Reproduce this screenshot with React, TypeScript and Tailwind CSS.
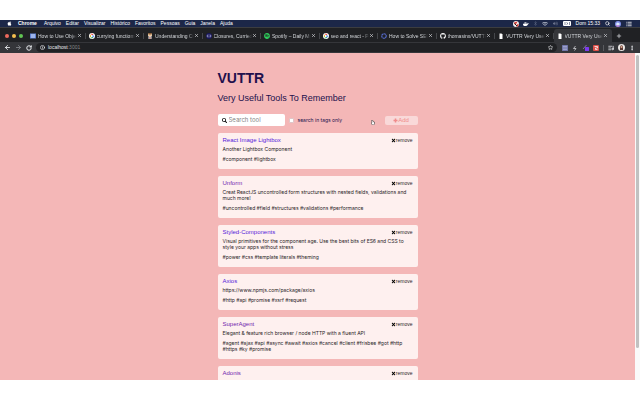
import type { ReactNode } from "react";
import { FaApple, FaDocker, FaGithub, FaSearch, FaSpotify, FaTimes, FaWifi, FaBluetoothB, FaVolumeUp } from "react-icons/fa";
import { ArrowLeft, ArrowRight, EllipsisVertical, Info, List, ListMusic, Plus, RotateCw, Search, Star, X } from "lucide-react";

type Tool = { title: string; description: string; tags: string; visited?: boolean };

const tools: Tool[] = [
  { title: "React Image Lightbox", description: "Another Lightbox Component", tags: "#component #lightbox" },
  {
    title: "Unform",
    description: "Creat ReactJS uncontrolled form structures with nested fields, validations and much more!",
    tags: "#uncontrolled #field #structures #validations #performance",
    visited: true,
  },
  {
    title: "Styled-Components",
    description: "Visual primitives for the component age. Use the best bits of ES6 and CSS to style your apps without stress",
    tags: "#power #css #template literals #theming",
  },
  { title: "Axios", description: "https://www.npmjs.com/package/axios", tags: "#http #api #promise #xsrf #request" },
  {
    title: "SuperAgent",
    description: "Elegant & feature rich browser / node HTTP with a fluent API",
    tags: "#agent #ajax #api #async #await #axios #cancel #client #frisbee #got #http #https #ky #promise",
    visited: true,
  },
  { title: "Adonis", description: "", tags: "", visited: true },
];

const menus = ["Arquivo", "Editar", "Visualizar", "Histórico", "Favoritos", "Pessoas", "Guia", "Janela", "Ajuda"];

function Google() {
  return (
    <svg viewBox="0 0 12 12" className="size-[6px]">
      <circle cx="6" cy="6" r="6" fill="#fff" />
      <g fill="none" strokeWidth="2">
        <path d="M8.6 3.6A3.5 3.5 0 0 0 3 4.3" stroke="#ea4335" />
        <path d="M3 4.3A3.5 3.5 0 0 0 3 7.8" stroke="#fbbc05" />
        <path d="M3 7.8A3.5 3.5 0 0 0 8.2 8.7" stroke="#34a853" />
        <path d="M8.2 8.7A3.5 3.5 0 0 0 9.5 6H6" stroke="#4285f4" />
      </g>
    </svg>
  );
}

function Doc() {
  return (
    <svg viewBox="0 0 12 12" className="size-[6px]">
      <rect y="1" width="12" height="10" fill="#5f83d8" />
      <path d="M2 4h8M2 8h8" stroke="#dce6ff" strokeWidth="2" />
    </svg>
  );
}

function Person() {
  return (
    <svg viewBox="0 0 12 12" className="size-[6px]">
      <path d="M2 1h8v5H2z" fill="#e8c8a0" />
      <path d="M3 0h6v3H3z" fill="#8b5a32" />
      <path d="M3 6h6v6H3z" fill="#e9e9e9" />
      <path d="M5 7h2v5H5z" fill="#9c4a3b" />
    </svg>
  );
}

function Closure() {
  return (
    <svg viewBox="0 0 12 12" className="size-[6px]">
      <circle cx="6" cy="6" r="6" fill="#17165c" />
      <path d="M4 3 2 6l2 3M8 3l2 3-2 3" fill="none" stroke="#e4e4ff" strokeWidth="1.2" />
      <circle cx="6" cy="6" r="1" fill="#fff" />
    </svg>
  );
}

function Ring() {
  return (
    <svg viewBox="0 0 12 12" className="size-[6px]">
      <circle cx="6" cy="6" r="4.5" fill="none" stroke="#5368c9" strokeWidth="2.4" strokeDasharray="4 .7" />
    </svg>
  );
}

function Page() {
  return (
    <svg viewBox="0 0 12 12" className="size-[6px]">
      <path d="M3 1h4l2 2v9H3z" fill="#fff" />
    </svg>
  );
}

const tabs: { icon: ReactNode; title: string }[] = [
  { icon: <Doc />, title: "How to Use Object" },
  { icon: <Google />, title: "currying functions j" },
  { icon: <Person />, title: "Understanding Cur" },
  { icon: <Closure />, title: "Closures, Curried F" },
  { icon: <FaSpotify className="size-[6px] text-[#2fd15d]" />, title: "Spotify – Daily Mix 1" },
  { icon: <Google />, title: "seo and react - Pe" },
  { icon: <Ring />, title: "How to Solve SEO I" },
  { icon: <FaGithub className="size-[6px] text-white" />, title: "thomasinx/VUTTR" },
  { icon: <Page />, title: "VUTTR Very Useful" },
  { icon: <Page />, title: "VUTTR Very Useful" },
];

function MenuBar() {
  return (
    <header className="flex h-[7px] shrink-0 items-center bg-[#1c2748] pr-2 pl-[7px] text-[5px] leading-[7px] text-white">
      <FaApple className="mr-[6px] size-[5px]" />
      <nav className="flex gap-[5px]">
        <strong className="mr-[2px]">Chrome</strong>
        {menus.map((menu) => (
          <span key={menu}>{menu}</span>
        ))}
      </nav>
      <div className="ml-auto flex items-center gap-[5px]">
        <div className="flex items-center gap-[4px]">
          <svg viewBox="0 0 12 12" className="size-[6px]">
            <circle cx="6" cy="6" r="6" fill="#f3eeee" />
            <path d="M2 3l7-2-2 4-4 2zM7 8l4-3v5l-4 2z" fill="#d93a35" />
            <path d="M3 5l5 5" stroke="#222" strokeWidth="2" />
          </svg>
          <FaDocker className="size-[6px]" />
          <FaBluetoothB className="size-[5px] text-[#58627f]" />
          <FaWifi className="size-[6px] text-[#bcc2d0]" />
        </div>
        <FaVolumeUp className="size-[5px] text-[#69718a]" />
        <svg viewBox="0 0 16 10" className="h-[5px] w-2">
          <rect width="16" height="10" rx="2" fill="#fff" />
          <path d="M4 2v6M7 3l3 2-3 2M13 2v6" fill="none" stroke="#1c2748" strokeWidth="1" />
        </svg>
        <span>Dom 15:33</span>
        <Search className="size-[5px]" strokeWidth={3} />
        <svg viewBox="0 0 12 12" className="size-[6px]">
          <circle cx="6" cy="6" r="6" fill="#8190e7" />
          <path d="M2 6q3-6 8 0-5 6-8 0" fill="#dbeaff" />
          <path d="M1 8q5 3 9 0l-3 3H4z" fill="#e66bba" />
        </svg>
        <List className="size-[6px]" strokeWidth={3} />
      </div>
    </header>
  );
}

function TabStrip() {
  return (
    <div className="flex h-[15px] shrink-0 items-end border-t border-[#3c3d40] bg-[#202124] pl-[5px] text-[5px] leading-[6px] text-[#d3d6da]">
      <div className="flex h-[13px] items-center gap-[3px]">
        <span className="size-[4px] rounded-full bg-[#ed6a5e]" />
        <span className="size-[4px] rounded-full bg-[#f5be4f]" />
        <span className="size-[4px] rounded-full bg-[#61c554]" />
      </div>
      <div className="ml-[4px] flex min-w-0 flex-1">
        {tabs.map((tab, i) => {
          const active = i === tabs.length - 1;
          return (
            <div
              key={i}
              className={`flex h-[13px] min-w-0 flex-1 items-center pr-[4px] pl-[3px] ${active ? "rounded-t-[3px] bg-[#35363a]" : ""}`}
            >
              <span className="shrink-0">{tab.icon}</span>
              <span className="ml-[2px] min-w-0 flex-1 mask-r-from-85% whitespace-nowrap">{tab.title}</span>
              <button aria-label="Close tab" className="shrink-0">
                <X className="size-[5px]" strokeWidth={3} />
              </button>
              {!active && <span className="-mr-[4px] ml-[3px] h-[6px] w-px shrink-0 bg-[#45474b]" />}
            </div>
          );
        })}
      </div>
      <button aria-label="New tab" className="mr-[18px] ml-[4px] flex h-[13px] items-center">
        <Plus className="size-[6px]" strokeWidth={3} />
      </button>
    </div>
  );
}

function Toolbar() {
  return (
    <div className="flex h-[11px] shrink-0 items-center bg-[#35363a] pr-[5px] pl-[4px] text-[5px] text-[#e8eaed]">
      <button aria-label="Back"><ArrowLeft className="size-[7px]" strokeWidth={3} /></button>
      <button aria-label="Forward" className="ml-[4px] text-[#85878b]"><ArrowRight className="size-[7px]" strokeWidth={3} /></button>
      <button aria-label="Reload" className="ml-[4px]"><RotateCw className="size-[6px]" strokeWidth={4} /></button>
      <div className="ml-[4px] flex h-[9px] flex-1 items-center rounded-full bg-[#202124] px-[4px]">
        <Info className="size-[5px]" strokeWidth={3} />
        <span className="ml-[3px]">
          localhost<span className="text-[#85878b]">:3001</span>
        </span>
        <Star className="ml-auto size-[5px]" strokeWidth={3} />
      </div>
      <div className="ml-[5px] flex items-center gap-[4px]">
        <svg viewBox="0 0 12 12" className="size-[6px]">
          <rect width="12" height="12" rx="1" fill="#7176a9" />
          <path d="M2 3h8M2 6h8M2 9h8" stroke="#c6c9e8" />
        </svg>
        <svg viewBox="0 0 12 12" className="size-[6px]">
          <path d="M7 2 3 7h5l-3 4" fill="none" stroke="#d0d1d4" strokeWidth="1.6" />
        </svg>
        <svg viewBox="0 0 14 14" className="size-[7px]">
          <path d="m2 10 7-8" stroke="#7e7398" strokeWidth="2" />
          <rect x="6" y="6" width="8" height="8" rx="1" fill="#7c3aed" />
        </svg>
        <svg viewBox="0 0 12 12" className="size-[6px]">
          <rect width="12" height="12" rx="2" fill="#dd4f48" />
          <path d="M3 3h6v3H5v3h4" fill="none" stroke="#fff" strokeWidth="1.5" />
        </svg>
        <span className="h-[6px] w-px bg-[#5a5b5f]" />
        <ListMusic className="size-[6px]" strokeWidth={3} />
        <svg viewBox="0 0 14 14" className="size-[7px]">
          <circle cx="7" cy="7" r="7" fill="#e9e6e4" />
          <path d="M4 12V5q3-5 6 0v7z" fill="#5c3b35" />
          <circle cx="7" cy="6" r="2" fill="#dca98e" />
        </svg>
        <EllipsisVertical className="size-[6px]" strokeWidth={3} />
      </div>
    </div>
  );
}

function ToolCard({ tool }: { tool: Tool }) {
  return (
    <article className="min-h-[36px] rounded-[2px] bg-[#fef0ef] px-[5px] pt-[3px] pb-[6px] text-[5px] leading-[6px] text-[#292326]">
      <div className="flex items-center justify-between">
        <h2 className="text-[6px] leading-[8px]">
          <a href="#tool" className={tool.visited ? "text-[#7325ae]" : "text-[#5620d9]"}>{tool.title}</a>
        </h2>
        <button className="flex items-center">
          <FaTimes className="size-[5px] text-black" />
          remove
        </button>
      </div>
      <p className="mt-[2px] font-[Inter,sans-serif]">{tool.description}</p>
      <p className="mt-[4px] mb-[1px] font-[Inter,sans-serif]">{tool.tags}</p>
    </article>
  );
}

export default function App() {
  return (
    <div className="flex h-screen flex-col overflow-hidden bg-white py-5 font-['Liberation_Sans',Arial,sans-serif]">
      <MenuBar />
      <TabStrip />
      <Toolbar />
      <div className="flex min-h-0 flex-1 bg-[#f4b7b7]">
        <main className="min-w-0 flex-1 overflow-hidden">
          <div className="mx-auto w-full max-w-[200px] pt-[17px] text-[#22104c]">
            <h1 className="text-[14px] leading-[16px] font-bold">VUTTR</h1>
            <p className="mt-[7px] text-[9px] leading-[10px]">Very Useful Tools To Remember</p>
            <form className="mt-[11px] flex items-center font-[Inter,sans-serif] text-[5px] leading-[8px]">
              <label className="flex h-[12px] w-[67px] items-center rounded-[2px] bg-white pl-[4px]">
                <FaSearch className="size-[5px] shrink-0 text-black" />
                <input
                  aria-label="Search tool"
                  placeholder="Search tool"
                  className="ml-[2px] w-full min-w-0 text-[6px] leading-[8px] outline-none placeholder:text-[#858585]"
                />
              </label>
              <input id="tags-only" type="checkbox" className="ml-[4px] size-[5px] appearance-none rounded-[1px] border border-[#dfc6c8] bg-white" />
              <label htmlFor="tags-only" className="ml-[4px]">search in tags only</label>
              <button type="button" className="ml-auto flex h-[9px] w-[33px] items-center justify-center rounded-[2px] bg-[#f9d9d9] font-['Liberation_Sans',Arial,sans-serif] text-[6px] text-[#f08b8c]">
                <svg viewBox="0 0 10 10" className="size-[5px]">
                  <path d="M5 1v8M1 5h8" stroke="currentColor" strokeWidth="3" />
                </svg>
                Add
              </button>
            </form>
            <div className="mt-[7px] flex flex-col gap-[7px]">
              {tools.map((tool) => (
                <ToolCard key={tool.title} tool={tool} />
              ))}
            </div>
          </div>
        </main>
        <div className="w-[5px] shrink-0 bg-[#fafafa] pt-[2px]">
          <div className="mx-[1px] h-[90%] rounded-full bg-[#c1c1c1]" />
        </div>
      </div>
      <svg viewBox="0 0 8 10" className="absolute top-[120px] left-[371px] h-[5px] w-[4px]">
        <path d="M1 1 3 0l1 3 3 1v4L5 10H3L0 6l2-1z" fill="#fff" stroke="#222" />
      </svg>
    </div>
  );
}
